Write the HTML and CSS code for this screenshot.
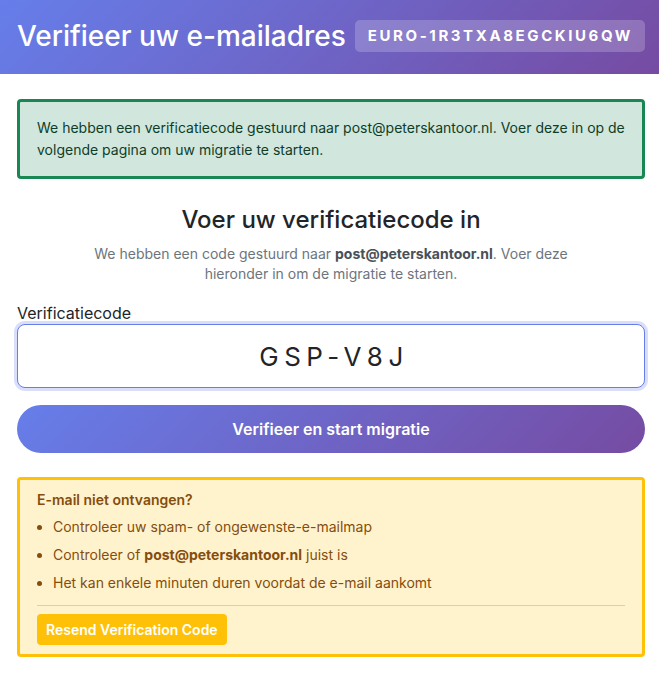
FILE: index.html
```html
<!DOCTYPE html>
<html lang="nl">
<head>
<meta charset="utf-8">
<title>Verifieer uw e-mailadres</title>
<link rel="stylesheet" href="styles.css">
</head>
<body>
<header class="topbar">
  <h1 class="title">Verifieer uw e-mailadres</h1>
  <span class="badge">EURO-1R3TXA8EGCKIU6QW</span>
</header>
<main class="content">
  <div class="alert-success">
    We hebben een verificatiecode gestuurd naar post@peterskantoor.nl. Voer deze in op de volgende pagina om uw migratie te starten.
  </div>
  <h2 class="heading">Voer uw verificatiecode in</h2>
  <p class="sub">We hebben een code gestuurd naar <strong>post@peterskantoor.nl</strong>. Voer deze hieronder in om de migratie te starten.</p>
  <form class="form">
    <label class="label" for="code">Verificatiecode</label>
    <input class="code-input" id="code" type="text" value="GSP-V8J">
    <button class="primary" type="button">Verifieer en start migratie</button>
  </form>
  <div class="help">
    <div class="help-title">E-mail niet ontvangen?</div>
    <ul class="help-list">
      <li>Controleer uw spam- of ongewenste-e-mailmap</li>
      <li>Controleer of <strong>post@peterskantoor.nl</strong> juist is</li>
      <li>Het kan enkele minuten duren voordat de e-mail aankomt</li>
    </ul>
    <hr class="divider">
    <button class="resend" type="button">Resend Verification Code</button>
  </div>
</main>
</body>
</html>
```
FILE: styles.css
```css
* { box-sizing: border-box; }
html, body { margin: 0; padding: 0; }
body {
  font-family: Inter, "Noto Sans", sans-serif;
  color: #212529;
  background: #fff;
  width: 659px;
}
.topbar {
  height: 74px;
  display: flex;
  align-items: center;
  justify-content: space-between;
  padding: 0 14px 0 17px;
  background: linear-gradient(135deg, #667eea 0%, #764ba2 100%);
  color: #fff;
}
.title {
  margin: 0;
  font-size: 28px;
  font-weight: 500;
  line-height: 1.2;
  white-space: nowrap;
}
.badge {
  background: rgba(255,255,255,0.2);
  border-radius: 5px;
  padding: 0 12px 0 13px;
  height: 32px;
  line-height: 32px;
  font-size: 15px;
  font-weight: 700;
  letter-spacing: 2.6px;
  white-space: nowrap;
  margin-top: -2px;
}
.content {
  padding: 25px 14px 0 17px;
}
.alert-success {
  background: #d1e7dd;
  border: 3px solid #198754;
  border-radius: 4px;
  color: #0f3d28;
  font-size: 14px;
  line-height: 22px;
  padding: 15px 17px 15px 17px;
}
.heading {
  margin: 27px 0 0;
  text-align: center;
  font-size: 24px;
  font-weight: 500;
  line-height: 28px;
  color: #212529;
}
.sub {
  margin: 10px auto 0;
  max-width: 490px;
  text-align: center;
  font-size: 14px;
  line-height: 20px;
  color: #6c757d;
}
.sub strong { color: #495057; font-weight: 700; }
.form {
  margin-top: 19px;
  display: flex;
  flex-direction: column;
}
.label {
  font-size: 16px;
  line-height: 20px;
  margin-bottom: 1px;
  color: #212529;
}
.code-input {
  height: 64px;
  width: 100%;
  border: 1px solid #667eea;
  border-radius: 8px;
  box-shadow: 0 0 0 3px rgba(102,126,234,0.25);
  outline: none;
  text-align: center;
  font-family: Inter, "Noto Sans", sans-serif;
  font-size: 26px;
  letter-spacing: 5.5px;
  padding: 0 0 0 6px;
  color: #212529;
  background: #fff;
}
.primary {
  margin-top: 17px;
  height: 48px;
  border: none;
  border-radius: 24px;
  background: linear-gradient(135deg, #667eea 0%, #764ba2 100%);
  color: #fff;
  font-family: Inter, "Noto Sans", sans-serif;
  font-size: 16px;
  font-weight: 600;
}
.help {
  margin-top: 24px;
  background: #fff3cd;
  border: 3px solid #ffc107;
  border-radius: 4px;
  padding: 9px 17px 9px 17px;
  color: #854d0e;
  font-size: 14px;
  line-height: 21px;
}
.help-title { font-weight: 600; }
.help-list {
  margin: 3px 0 0;
  padding-left: 16px;
  list-style: disc;
}
.help-list li { line-height: 28px; }
.help-list strong { font-weight: 700; }
.divider {
  margin: 8px 0 8px;
  border: none;
  border-top: 1px solid #e0cfa4;
  height: 0;
}
.resend {
  background: #ffc107;
  color: #fff;
  border: none;
  border-radius: 4px;
  height: 31px;
  padding: 0 9px;
  font-family: Inter, "Noto Sans", sans-serif;
  font-size: 14px;
  font-weight: 600;
  display: block;
}
```
